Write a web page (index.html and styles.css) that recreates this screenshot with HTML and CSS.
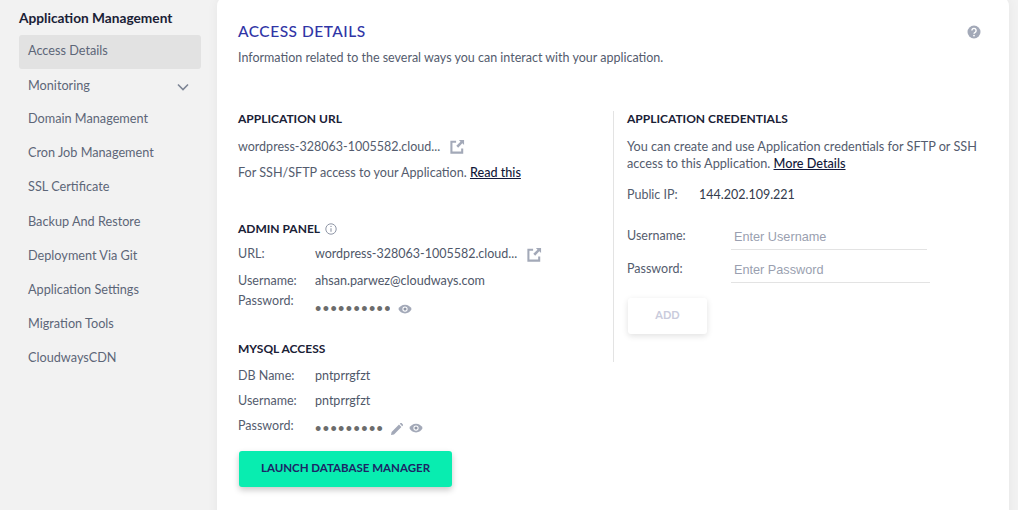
FILE: index.html
```html
<!DOCTYPE html>
<html lang="en">
<head>
<meta charset="utf-8">
<title>Access Details</title>
<link rel="stylesheet" href="styles.css">
</head>
<body>
<div class="page">
  <aside class="sidebar">
    <h2 class="side-title">Application Management</h2>
    <nav class="side-nav">
      <a class="side-item active">Access Details</a>
      <a class="side-item short">Monitoring
        <svg class="chev" viewBox="0 0 12 8" width="12" height="8"><path d="M1 1.500l5 5 5-5" fill="none" stroke="#7d8595" stroke-width="1.6"/></svg>
      </a>
      <a class="side-item">Domain Management</a>
      <a class="side-item">Cron Job Management</a>
      <a class="side-item">SSL Certificate</a>
      <a class="side-item">Backup And Restore</a>
      <a class="side-item">Deployment Via Git</a>
      <a class="side-item">Application Settings</a>
      <a class="side-item">Migration Tools</a>
      <a class="side-item">CloudwaysCDN</a>
    </nav>
  </aside>

  <main class="card">
    <header class="card-head">
      <div>
        <h1 class="card-title">ACCESS DETAILS</h1>
        <p class="card-sub">Information related to the several ways you can interact with your application.</p>
      </div>
      <svg class="help" viewBox="0 0 14 14" width="14" height="14"><circle cx="7" cy="7" r="6.500" fill="#a3a9b8"/><path d="M4.900 5.500a2.100 2.100 0 1 1 3.200 1.800c-.7.4-1.100.8-1.100 1.500" fill="none" stroke="#fff" stroke-width="1.400"/><circle cx="7" cy="10.600" r=".9" fill="#fff"/></svg>
    </header>

    <div class="columns">
      <section class="col-left">
        <h3 class="sec-title">APPLICATION URL</h3>
        <div class="url-line">
          <span>wordpress-328063-1005582.cloud...</span>
          <svg class="ext" viewBox="0 0 16 16" width="15" height="15"><path d="M6.500 3H1.500v11.500H13V10" fill="none" stroke="#a3a9b8" stroke-width="2.200"/><path d="M9.500 1H15v5.500l-1.900-1.900-4.400 4.600-2-2 4.500-4.400z" fill="#a3a9b8"/></svg>
        </div>
        <p class="ssh">For SSH/SFTP access to your Application. <a class="link">Read this</a></p>

        <h3 class="sec-title admin">ADMIN PANEL
          <svg class="info" viewBox="0 0 12 12" width="12" height="12"><circle cx="6" cy="6" r="5.200" fill="none" stroke="#8f96a6"/><path d="M6 5.200v3.600" stroke="#8f96a6" stroke-width="1.100"/><circle cx="6" cy="3.400" r=".7" fill="#8f96a6"/></svg>
        </h3>
        <div class="row r-url"><span class="key">URL:</span><span class="val">wordpress-328063-1005582.cloud...</span>
          <svg class="ext" viewBox="0 0 16 16" width="15" height="15"><path d="M6.500 3H1.500v11.500H13V10" fill="none" stroke="#a3a9b8" stroke-width="2.200"/><path d="M9.500 1H15v5.500l-1.900-1.900-4.400 4.600-2-2 4.500-4.400z" fill="#a3a9b8"/></svg>
        </div>
        <div class="row r-user"><span class="key">Username:</span><span class="val mail">ahsan.parwez@cloudways.com</span></div>
        <div class="row r-pass"><span class="key">Password:</span>
          <span class="secret clipped">•••••••••••</span>
          <svg class="eye e1" viewBox="0 0 16 11" width="14" height="10"><path d="M8 .5C4.600.5 1.700 2.400.4 5.500 1.700 8.600 4.600 10.500 8 10.500s6.300-1.900 7.600-5C14.300 2.400 11.400.5 8 .5z" fill="#a3a9b8"/><circle cx="8" cy="5.500" r="3" fill="#fff"/><circle cx="8" cy="5.500" r="1.800" fill="#8f96a6"/></svg>
        </div>

        <h3 class="sec-title mysql">MYSQL ACCESS</h3>
        <div class="row r-db"><span class="key">DB Name:</span><span class="val">pntprrgfzt</span></div>
        <div class="row r-db"><span class="key">Username:</span><span class="val">pntprrgfzt</span></div>
        <div class="row r-pass2"><span class="key">Password:</span>
          <span class="secret">•••••••••</span>
          <svg class="pen" viewBox="0 0 12 12" width="12" height="12"><path d="M0 12l.6-3L8 1.600 10.400 4 3 11.400zM8.800.8l.7-.7a.8.800 0 0 1 1.100 0l1.300 1.300a.8.800 0 0 1 0 1.100l-.7.700z" fill="#a3a9b8"/></svg>
          <svg class="eye" viewBox="0 0 16 11" width="14" height="10"><path d="M8 .5C4.600.5 1.700 2.400.4 5.500 1.700 8.600 4.600 10.500 8 10.500s6.300-1.900 7.600-5C14.300 2.400 11.400.5 8 .5z" fill="#a3a9b8"/><circle cx="8" cy="5.500" r="3" fill="#fff"/><circle cx="8" cy="5.500" r="1.800" fill="#8f96a6"/></svg>
        </div>
        <button class="launch">LAUNCH DATABASE MANAGER</button>
      </section>

      <section class="col-right">
        <h3 class="sec-title">APPLICATION CREDENTIALS</h3>
        <p class="cred-text">You can create and use Application credentials for SFTP or SSH access to this Application. <a class="link">More Details</a></p>
        <div class="ip"><span class="ip-key">Public IP:</span><span class="ip-val">144.202.109.221</span></div>
        <div class="field f-user"><span class="f-key">Username:</span><span class="f-input">Enter Username</span></div>
        <div class="field f-pass"><span class="f-key">Password:</span><span class="f-input wide">Enter Password</span></div>
        <button class="add">ADD</button>
      </section>
    </div>
  </main>
</div>
</body>
</html>
```

FILE: styles.css
```css
* { box-sizing: border-box; }
html, body { margin: 0; height: 100%; overflow: hidden; }
body {
  background: #f2f2f2;
  font-family: Lato, "Open Sans", sans-serif;
  font-size: 12.5px;
  color: #545c6e;
}
h1, h2, h3, p { margin: 0; font-weight: normal; }
.page { display: flex; align-items: flex-start; height: 510px; overflow: hidden; }

.sidebar { width: 217px; flex: none; padding: 9px 16px 0 19px; }
.side-title { font-size: 13.7px; line-height: 17px; color: #1a2136; font-weight: 700; }
.side-nav { display: flex; flex-direction: column; margin-top: 9px; font-size: 12.7px; }
.side-item {
  display: flex; align-items: center; justify-content: space-between;
  height: 34.2px; padding: 0 12px 0 9px; color: #5d6678;
}
.side-item.active { background: #e2e2e2; border-radius: 3px; padding-bottom: 4px; height: 34px; }
.side-item.short { height: 32px; }
.chev { margin-top: 3px; }

.card {
  width: 792px; flex: none; height: 530px; margin-top: -4px;
  background: #fff; border-radius: 10px;
  box-shadow: 0 0 12px rgba(0,0,0,.05);
  padding: 25px 21px 0 21px;
}
.card-head { display: flex; justify-content: space-between; align-items: flex-start; padding-right: 7px; }
.card-title { font-size: 15.5px; line-height: 20px; color: #3035a6; font-weight: 500; letter-spacing: .5px; }
.card-sub { margin-top: 8px; line-height: 18px; }
.help { margin-top: 4px; }

.columns { display: flex; margin-top: 44px; }
.col-left { width: 375px; flex: none; }
.col-right { flex: 1; border-left: 1px solid #e3e3e3; padding-left: 13px; height: 251px; }

.sec-title { font-size: 12px; line-height: 16px; color: #1a2136; font-weight: 700; }
.url-line { display: flex; align-items: center; gap: 10px; margin-top: 10px; height: 18px; }
.ssh { margin-top: 9px; line-height: 18px; font-size: 12.6px; }
.link { color: #12183a; font-weight: 500; text-decoration: underline; }

.admin { display: flex; align-items: center; gap: 5px; margin-top: 39px; }
.row { display: flex; align-items: flex-start; line-height: 18px; }
.key { width: 77px; flex: none; }
.val { color: #4f5769; }
.mail { font-size: 12.6px; }
.r-url { margin-top: 8px; height: 18px; }
.r-url .ext { margin: 2px 0 0 10px; }
.r-user { margin-top: 9px; }
.r-pass { margin-top: 2px; height: 20px; }
.secret {
  color: #6c6c6c; font-family: "Liberation Sans", sans-serif; font-size: 18px;
  letter-spacing: 1.4px; line-height: 18px; margin-top: 8px; white-space: nowrap;
}
.clipped { width: 75px; overflow: hidden; }
.e1 { margin: 12px 0 0 8px; }
.mysql { margin-top: 29px; }
.r-db { margin-top: 10px; height: 18px; }
.r-db + .r-db { margin-top: 7px; }
.r-pass2 { margin-top: 7px; height: 20px; }
.r-pass2 .secret { width: 70px; margin-top: 3px; }
.pen { margin: 6px 0 0 6px; }
.r-pass2 .eye { margin: 6px 0 0 6px; }
.launch {
  display: block; margin: 14px 0 0 1px; width: 213px; height: 36px; padding: 0 0 2px;
  background: #08edb0; border: 0; border-radius: 3px;
  box-shadow: 0 3px 6px rgba(0,0,0,.22);
  font: 700 11.5px/16px Lato, sans-serif; color: #1c2566;
}

.cred-text { margin-top: 11px; line-height: 17px; width: 360px; font-size: 12.7px; }
.ip { margin-top: 14px; line-height: 18px; display: flex; }
.ip-key { width: 72px; }
.ip-val { color: #333b4c; }
.field { display: flex; align-items: flex-start; line-height: 18px; }
.f-key { width: 104px; flex: none; padding-top: 1px; }
.f-input { width: 196px; height: 24px; border-bottom: 1px solid #e3e3e3; padding: 2px 0 0 3px; color: #9a9fb0; font-family: "Liberation Sans", sans-serif; font-size: 12.7px; }
.f-input.wide { width: 199px; }
.f-user { margin-top: 22px; }
.f-pass { margin-top: 9px; }
.add {
  display: block; margin: 15px 0 0 1px; width: 79px; height: 36px; padding: 0 0 2px;
  background: #fff; border: 0; border-radius: 3px;
  box-shadow: 0 2px 6px rgba(0,0,0,.12);
  font: 700 11px/16px Lato, sans-serif; color: #c9cbdc;
}
```
